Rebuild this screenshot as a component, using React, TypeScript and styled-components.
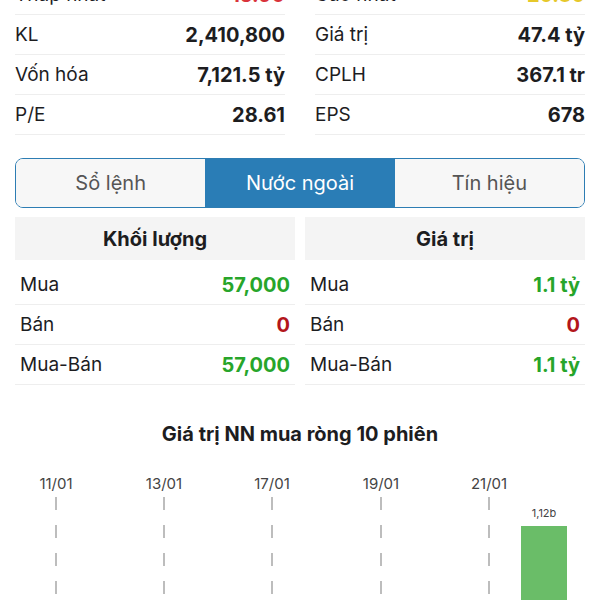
import styled, { createGlobalStyle } from "styled-components"

const GlobalStyle = createGlobalStyle`
  *, *::before, *::after {
    box-sizing: border-box;
  }
  body {
    margin: 0;
    background: #ffffff;
    font-family: Inter, "Noto Sans", "Liberation Sans", sans-serif;
    color: #1d1d1f;
  }
`

const Page = styled.div`
  margin-top: -25px;
  padding: 0 15px;
`

const StatsGrid = styled.div`
  display: grid;
  grid-template-columns: 1fr 1fr;
  column-gap: 30px;
`

const StatRow = styled.div`
  display: flex;
  align-items: center;
  justify-content: space-between;
  height: 40px;
  border-bottom: 1px solid #eeeeee;
  font-size: 19px;
`

const Label = styled.span`
  font-weight: 400;
  color: #1d1d1f;
`

const Value = styled.span<{ $tone?: string }>`
  font-size: 20px;
  font-weight: 700;
  color: ${p => p.$tone || "#1d1d1f"};
`

const Segmented = styled.div`
  display: grid;
  grid-template-columns: repeat(3, 1fr);
  height: 50px;
  margin-top: 23px;
  border: 1.5px solid #2d7db3;
  border-radius: 8px;
  overflow: hidden;
`

const Segment = styled.div<{ $active?: boolean }>`
  display: flex;
  align-items: center;
  justify-content: center;
  font-size: 20px;
  color: ${p => (p.$active ? "#ffffff" : "#555555")};
  background: ${p => (p.$active ? "#2a7db6" : "#f7f7f7")};
`

const ForeignGrid = styled.div`
  display: grid;
  grid-template-columns: 1fr 1fr;
  column-gap: 10px;
  margin-top: 9px;
`

const Column = styled.div`
  display: flex;
  flex-direction: column;
`

const ColumnHead = styled.div`
  height: 43px;
  display: flex;
  align-items: center;
  justify-content: center;
  background: #f4f4f4;
  font-size: 20px;
  font-weight: 700;
  margin-bottom: 5px;
`

const TradeRow = styled(StatRow)`
  padding: 0 5px;
`

const ChartTitle = styled.div`
  margin-top: 37px;
  text-align: center;
  font-size: 20px;
  font-weight: 700;
`

const ChartBox = styled.div`
  margin-top: 24px;
`

const GREEN = "#27a52a"
const RED = "#b3161b"

const stats: [string, string, string?][][] = [
  [["Thấp nhất", "15.90", "#d9333b"], ["Cao nhất", "20.30", "#e6c82a"]],
  [["KL", "2,410,800"], ["Giá trị", "47.4 tỷ"]],
  [["Vốn hóa", "7,121.5 tỷ"], ["CPLH", "367.1 tr"]],
  [["P/E", "28.61"], ["EPS", "678"]],
]

const trades = [
  { title: "Khối lượng", rows: [["Mua", "57,000", GREEN], ["Bán", "0", RED], ["Mua-Bán", "57,000", GREEN]] },
  { title: "Giá trị", rows: [["Mua", "1.1 tỷ", GREEN], ["Bán", "0", RED], ["Mua-Bán", "1.1 tỷ", GREEN]] },
]

const dates = [
  { label: "11/01", x: 41 },
  { label: "13/01", x: 149 },
  { label: "17/01", x: 257 },
  { label: "19/01", x: 366 },
  { label: "21/01", x: 474 },
]

const NetChart = () => (
  <svg width="570" height="150" viewBox="0 0 570 150">
    {dates.map(d => (
      <g key={d.label}>
        <text x={d.x} y={19} textAnchor="middle" fontSize="15" fill="#444" fontFamily="Inter, sans-serif">
          {d.label}
        </text>
        <line x1={d.x} y1={27} x2={d.x} y2={150} stroke="#9a9a9a" strokeWidth="1.3" strokeDasharray="13 15" />
      </g>
    ))}
    <text x={529} y={47} textAnchor="middle" fontSize="11" fill="#444" fontFamily="Inter, sans-serif">1,12b</text>
    <rect x={506} y={56} width={46} height={94} fill="#6abd68" />
  </svg>
)

const App = () => (
  <>
    <GlobalStyle />
    <Page>
      <StatsGrid>
        {stats.flat().map(([label, value, tone]) => (
          <StatRow key={label}>
            <Label>{label}</Label>
            <Value $tone={tone}>{value}</Value>
          </StatRow>
        ))}
      </StatsGrid>

      <Segmented>
        <Segment>Sổ lệnh</Segment>
        <Segment $active>Nước ngoài</Segment>
        <Segment>Tín hiệu</Segment>
      </Segmented>

      <ForeignGrid>
        {trades.map(t => (
          <Column key={t.title}>
            <ColumnHead>{t.title}</ColumnHead>
            {t.rows.map(([label, value, tone]) => (
              <TradeRow key={label}>
                <Label>{label}</Label>
                <Value $tone={tone}>{value}</Value>
              </TradeRow>
            ))}
          </Column>
        ))}
      </ForeignGrid>

      <ChartTitle>Giá trị NN mua ròng 10 phiên</ChartTitle>
      <ChartBox>
        <NetChart />
      </ChartBox>
    </Page>
  </>
)

export default App
